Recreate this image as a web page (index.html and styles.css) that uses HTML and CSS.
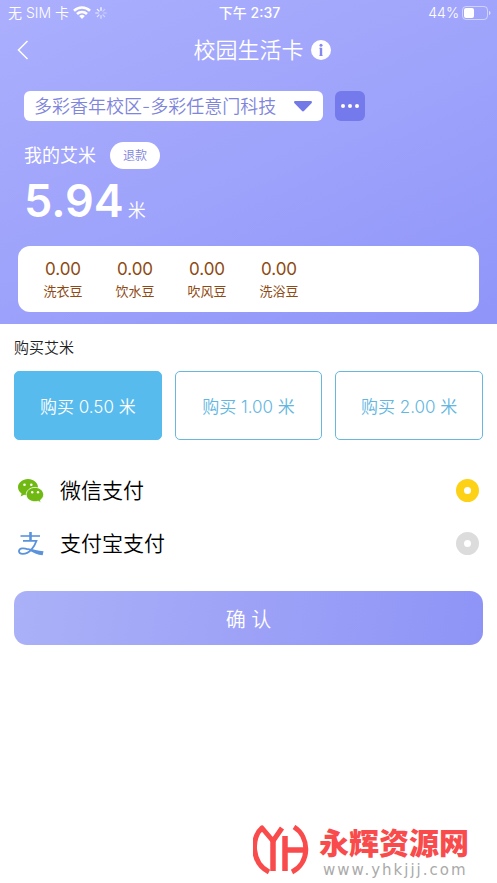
FILE: index.html
```html
<!DOCTYPE html>
<html lang="zh-CN">
<head>
<meta charset="utf-8">
<meta name="viewport" content="width=device-width, initial-scale=1">
<title>校园生活卡</title>
<link rel="stylesheet" href="styles.css">
</head>
<body>
<div class="page">
  <header class="hero">
    <div class="status">
      <div class="status-side">
        <span>无 SIM 卡</span>
        <svg class="wifi" width="18" height="13" viewBox="0 0 18 13" fill="none" stroke="#fff" stroke-width="2.6"><path d="M1 4.8a11.5 11.5 0 0 1 16 0M4 8a7.2 7.2 0 0 1 10 0"/><path d="M9 13 6.2 10.1a4 4 0 0 1 5.6 0z" fill="#fff" stroke="none"/></svg>
        <svg class="spinner" width="12" height="12" viewBox="0 0 12 12" stroke="#fff" stroke-width="1.2" stroke-linecap="round"><path d="M6 .7v2.6"/><path d="m9.7 2.3-1.8 1.8" opacity=".4"/><path d="M11.3 6H8.7" opacity=".4"/><path d="M9.7 9.7 7.9 7.9" opacity=".5"/><path d="M6 11.3V8.7" opacity=".6"/><path d="m2.3 9.7 1.8-1.8" opacity=".7"/><path d="M.7 6h2.6" opacity=".8"/><path d="m2.3 2.3 1.8 1.8" opacity=".9"/></svg>
      </div>
      <span class="clock">下午 2:37</span>
      <div class="status-side status-end">
        <span>44%</span>
        <svg width="29" height="14" viewBox="0 0 29 14"><rect x=".5" y=".5" width="25" height="13" rx="3.5" fill="none" stroke="#fff" stroke-opacity=".5"/><rect x="2" y="2" width="10" height="10" rx="2" fill="#fff"/><path d="M27 5c2 .6 2 3.400 0 4z" fill="#fff" opacity=".6"/></svg>
      </div>
    </div>
    <nav class="nav">
      <button class="icon-button back" type="button" aria-label="返回"><svg width="12" height="20" viewBox="0 0 12 20" fill="none" stroke="#fff" stroke-width="1.500"><path d="m10.500 1-9 9 9 9"/></svg></button>
      <h1 class="title">校园生活卡</h1>
      <button class="icon-button" type="button" aria-label="说明"><svg width="20" height="20" viewBox="0 0 20 20"><circle cx="10" cy="10" r="10" fill="#fff"/><circle cx="10" cy="5.200" r="1.500" fill="#8388ee"/><path d="M8.500 8.300H10M8.500 15.400h3" fill="none" stroke="#8388ee" stroke-width="1"/><path d="M10 7.800v8" stroke="#8388ee" stroke-width="2.400"/></svg></button>
    </nav>
    <div class="campus">
      <div class="campus-field">
        <select class="campus-select" aria-label="校区"><option>多彩香年校区-多彩任意门科技</option></select>
        <svg class="caret" width="18" height="11" viewBox="0 0 18 11"><path d="M1.500 0h15c1.400 0 1.900 1.300 1 2.200L10.200 9.800c-.7.800-1.700.8-2.400 0L.5 2.200C-.4 1.300.1 0 1.500 0z" fill="#7479e8"/></svg>
      </div>
      <button class="more" type="button" aria-label="更多"><svg width="18" height="4" viewBox="0 0 18 4" fill="#fff"><circle cx="2" cy="2" r="2"/><circle cx="9" cy="2" r="2"/><circle cx="16" cy="2" r="2"/></svg></button>
    </div>
    <div class="balance-head"><span>我的艾米</span><button class="refund" type="button">退款</button></div>
    <p class="balance"><strong>5.94</strong><span>米</span></p>
    <dl class="beans">
      <div class="bean"><dt>洗衣豆</dt><dd>0.00</dd></div>
      <div class="bean"><dt>饮水豆</dt><dd>0.00</dd></div>
      <div class="bean"><dt>吹风豆</dt><dd>0.00</dd></div>
      <div class="bean"><dt>洗浴豆</dt><dd>0.00</dd></div>
    </dl>
  </header>
  <main class="main">
    <h2 class="section-title">购买艾米</h2>
    <div class="amounts">
      <button class="amount selected" type="button">购买 0.50 米</button>
      <button class="amount" type="button">购买 1.00 米</button>
      <button class="amount" type="button">购买 2.00 米</button>
    </div>
    <div class="payments">
      <label class="payment" for="wechat">
        <svg width="26" height="24" viewBox="0 0 26 24"><path d="M10 0C4.500 0 0 3.700 0 8.300c0 2.600 1.400 4.800 3.600 6.300L2.700 17.500l3.400-1.800c1.200.4 2.500.6 3.900.6 5.500 0 10-3.500 10-8S15.500 0 10 0z" fill="#6fb912"/><path d="M17 8.400c-4.900 0-8.800 3.200-8.800 7.200s3.900 7.100 8.800 7.100c1.100 0 2.200-.2 3.200-.5l2.900 1.600-.8-2.600c2-1.300 3.300-3.300 3.300-5.600 0-4-3.800-7.200-8.600-7.200z" fill="#6fb912" stroke="#fff" stroke-width=".8"/><g fill="#fff"><circle cx="6.500" cy="5.800" r="1.300"/><circle cx="13.300" cy="5.800" r="1.300"/><circle cx="14.200" cy="13.300" r="1.200"/><circle cx="20" cy="13.300" r="1.200"/></g></svg>
        <span>微信支付</span>
        <input class="radio" id="wechat" type="radio" name="payment" checked>
      </label>
      <label class="payment" for="alipay">
        <svg width="26" height="24" viewBox="0 0 26 24" fill="none" stroke="#5b92dc"><path d="M2.500 4h19.500" stroke-width="1.600"/><path d="M12.500 0v8.500" stroke-width="2.600"/><path d="M5 8.800h13.500c-2 6-7 13-13.800 13-2.700 0-4-1.200-3.700-3 .5-3 5-2.800 9-1.500" stroke-width="1.800"/><path d="M10 16.200c5 .8 10 2.800 15.500 3l-.8 4c-5-.3-9.700-2.800-14.700-5.500z" fill="#5b92dc" stroke="none"/></svg>
        <span>支付宝支付</span>
        <input class="radio" id="alipay" type="radio" name="payment">
      </label>
    </div>
    <button class="confirm" type="button">确 认</button>
  </main>
  <footer class="brand">
    <svg width="56" height="50" viewBox="0 0 56 50" fill="none" stroke="#f94b4b" stroke-width="5"><path d="M16 47C-2 38-2 12 9 3l11 13L29 3" stroke-linejoin="round"/><path d="M20 15v31M32 11v35M32 25h20" stroke-width="5.500"/><path d="M41 2c16 10 16 36-2 45"/></svg>
    <div class="brand-text"><strong>永辉资源网</strong><span>www.yhkjjj.com</span></div>
  </footer>
</div>
</body>
</html>
```
FILE: styles.css
```css
* { box-sizing: border-box; }
body { margin: 0; background: #fff; color: #000; font-family: Inter, "Noto Sans CJK SC", sans-serif; }
button, select { font: inherit; color: inherit; border: 0; margin: 0; padding: 0; }
svg { display: block; flex: none; }
.page { min-height: 100vh; display: flex; flex-direction: column; }
.hero { color: #fff; padding-bottom: 12px; background: linear-gradient(155deg, #abaffd 0%, #9ea3fb 50%, #8f95f9 100%); }
.status { height: 25px; padding: 0 6px 0 8px; display: grid; grid-template-columns: 1fr auto 1fr; align-items: center; font-size: 14px; line-height: 20px; font-weight: 350; }
.status-side { display: flex; align-items: center; gap: 4px; }
.status-end { justify-content: flex-end; gap: 3px; }
.clock { font-weight: 500; }
.nav { height: 50px; padding: 0 17px; display: grid; grid-template-columns: 1fr auto 1fr; align-items: center; column-gap: 7px; }
.icon-button { background: none; justify-self: start; }
.title { margin: 0; font-size: 22px; line-height: 30px; font-weight: 350; }
.campus { margin: 16px 24px 0; display: flex; gap: 12px; }
.campus-field { position: relative; width: 66.600%; }
.campus-select { appearance: none; width: 100%; height: 30px; padding: 0 36px 0 10px; border-radius: 6px; background: #fff; color: #8085dc; font-size: 18px; font-weight: 350; }
.caret { position: absolute; right: 11px; top: 10px; pointer-events: none; }
.more { width: 30px; height: 30px; border-radius: 6px; background: #7479ec; display: grid; place-items: center; }
.balance-head { margin: 21px 24px 0; display: flex; align-items: center; gap: 14px; font-size: 18px; line-height: 27px; }
.refund { width: 50px; height: 27px; border-radius: 14px; background: #fff; color: #8085dc; font-size: 12px; font-weight: 350; }
.balance { margin: 8px 24px 0; display: flex; align-items: baseline; gap: 4px; line-height: 48px; font-size: 18px; font-weight: 350; }
.balance strong { font-size: 45px; font-weight: 600; }
.beans { margin: 11px 18px 0; height: 66px; padding: 0 9px; border-radius: 12px; background: #fff; color: #8d4a13; display: flex; align-items: center; }
.bean { width: 72px; display: flex; flex-direction: column-reverse; align-items: center; }
.bean dt { font-size: 13px; line-height: 20px; }
.bean dd { margin: 0; font-size: 17px; line-height: 24px; }
.main { padding: 12px 14px 0; }
.section-title { margin: 0; font-size: 15px; line-height: 23px; font-weight: 350; color: #222; }
.amounts { margin-top: 12px; display: grid; grid-template-columns: repeat(3, 1fr); gap: 13px; }
.amount { height: 69px; border: 1px solid #67b8dc; border-radius: 5px; background: #fff; color: #62b6df; font-size: 17px; font-weight: 350; }
.amount.selected { background: #57bbed; border-color: #57bbed; color: #fff; }
.payments { margin-top: 24px; }
.payment { height: 53px; padding: 0 4px; display: flex; align-items: center; gap: 16px; font-size: 21px; line-height: 30px; font-weight: 350; }
.radio { appearance: none; width: 23px; height: 23px; margin: 0 0 0 auto; border: 8px solid #dcdcdc; border-radius: 50%; background: #fff; }
.radio:checked { border-color: #fcd116; }
.confirm { display: block; width: 100%; height: 54px; margin-top: 21px; border-radius: 13px; background: linear-gradient(100deg, #abb1f7, #9da2f7 50%, #8e94f6); color: #fff; font-size: 20px; font-weight: 350; }
.brand { margin-top: auto; padding: 0 28px 4px; display: flex; justify-content: flex-end; gap: 10px; }
.brand-text { display: flex; flex-direction: column; }
.brand-text strong { font-size: 30px; line-height: 36px; font-weight: 900; color: #f94b4b; }
.brand-text span { padding-left: 4px; font-family: "DejaVu Sans", sans-serif; font-size: 15px; line-height: 18px; letter-spacing: 2px; color: #aaa; }
```
